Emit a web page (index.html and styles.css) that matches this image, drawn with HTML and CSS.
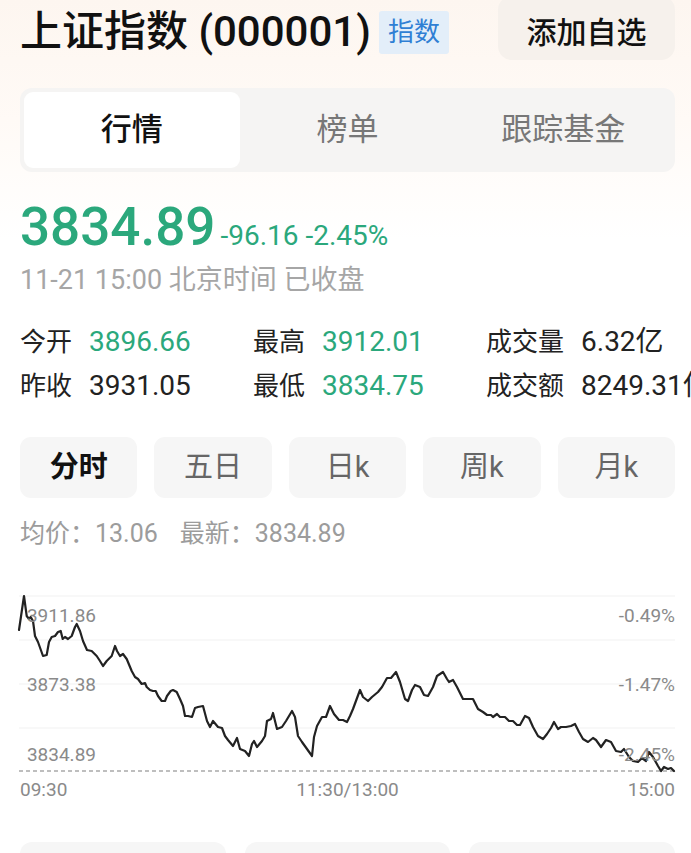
FILE: index.html
```html
<!DOCTYPE html>
<html lang="zh-CN">
<head>
    <meta charset="UTF-8">
    <meta name="viewport" content="width=device-width, initial-scale=1.0">
    <title>上证指数 (000001)</title>
    <link rel="stylesheet" href="styles.css">
</head>
<body>
    <div class="page">
        <header class="top">
            <div class="title-wrap">
                <h1 class="title">上证指数 (000001)</h1>
                <span class="badge">指数</span>
            </div>
            <button class="add-btn">添加自选</button>
        </header>

        <nav class="tabs">
            <div class="tab active">行情</div>
            <div class="tab">榜单</div>
            <div class="tab">跟踪基金</div>
        </nav>

        <section class="quote">
            <div class="price-row">
                <span class="price">3834.89</span>
                <span class="change">-96.16 -2.45%</span>
            </div>
            <div class="time">11-21 15:00 北京时间 已收盘</div>
        </section>

        <section class="stats">
            <div class="stat"><span class="label">今开</span><span class="value green">3896.66</span></div>
            <div class="stat"><span class="label">最高</span><span class="value green">3912.01</span></div>
            <div class="stat"><span class="label">成交量</span><span class="value">6.32亿</span></div>
            <div class="stat"><span class="label">昨收</span><span class="value">3931.05</span></div>
            <div class="stat"><span class="label">最低</span><span class="value green">3834.75</span></div>
            <div class="stat"><span class="label">成交额</span><span class="value">8249.31亿</span></div>
        </section>

        <div class="periods">
            <div class="period active">分时</div>
            <div class="period">五日</div>
            <div class="period">日k</div>
            <div class="period">周k</div>
            <div class="period">月k</div>
        </div>

        <div class="avg">均价：13.06<span class="latest">最新：3834.89</span></div>

        <div class="chart">
            <svg class="chart-svg" width="655" height="190" viewBox="20 585 655 190">
                <g class="grid">
                    <line x1="19" y1="597" x2="675" y2="597"/>
                    <line x1="19" y1="641" x2="675" y2="641"/>
                    <line x1="19" y1="685" x2="675" y2="685"/>
                    <line x1="19" y1="729" x2="675" y2="729"/>
                </g>
                <line class="base" x1="19" y1="772" x2="675" y2="772"/>
                <polyline class="line" points="19,631 24,597 26.7,617 29,620 30.7,618 33,622 35,637 38,643 43,657 46.7,656 49,643 51.7,638 55,637 58,633 60.7,632 62.7,640 65,638 68,640 71.7,637 75,628 76.7,625 80,632 83,642 87,651 91.7,652 96.7,657 100,662 103,667 106.7,662 111.7,657 115,647 117,652 120,657 123,655 126.7,660 131.7,672 135,678 138,680 141.7,685 145,684 146.7,688 150,691 153,692 155.7,692 158,697 161.7,702 165,702 167,697 170.7,692 173,691 176.7,693 180,700 183,707 185,717 188,717 192,718 195,709 198,708 203,707 207,722 210,728 213,722 218,728 222,729 225,737 228,741 233,747 237,739 240,750 245,752 249,757 252,745 254,742 257,748 262,742 265,737 267,722 271,720 273,714 277,730 282,728 286,722 292,712 295,718 298,737 302,743 307,750 312,757 314,738 317,727 322,718 326,718 330,707 334,715 339,721 343,721 347,723 350,717 353,710 360,691 363,698 368,702 372,698 378,693 382,688 387,679 391,679 396,673 400,683 405,700 408,702 412,691 415,686 420,688 424,696 428,697 433,688 437,677 443,673 447,680 449,683 453,681 457,688 463,700 468,700 473,700 478,710 483,713 487,716 491,716 493,718 497,715 500,718 505,718 509,722 513,722 517,726 520,726 525,717 529,719 533,728 538,737 543,740 547,735 551,729 554,723 558,730 561,728 566,728 571,727 575,725 579,733 583,740 588,743 593,739 596,741 601,748 606,741 611,743 616,752 621,753 624,750 629,758 633,762 638,763 642,759 646,762 649,753 653,758 658,767 661,772 664,768 668,770 671,769 674,772"/>
            </svg>
            <span class="y-label left l1">3911.86</span>
            <span class="y-label left l2">3873.38</span>
            <span class="y-label left l3">3834.89</span>
            <span class="y-label right l1">-0.49%</span>
            <span class="y-label right l2">-1.47%</span>
            <span class="y-label right l3">-2.45%</span>
        </div>

        <div class="axis">
            <span>09:30</span>
            <span>11:30/13:00</span>
            <span>15:00</span>
        </div>

        <div class="cards">
            <div class="card"></div>
            <div class="card"></div>
            <div class="card"></div>
        </div>
    </div>
</body>
</html>
```

FILE: styles.css
```css
body {
    margin: 0;
    font-family: Roboto, "Noto Sans CJK SC", sans-serif;
    color: #1a1a1a;
    background: linear-gradient(180deg, #fdf6f0 0, #fffaf6 120px, #ffffff 240px);
    overflow: hidden;
}

.page {
    padding: 0 16px 0 20px;
}

.top {
    display: flex;
    align-items: center;
    justify-content: space-between;
    height: 56px;
    padding-top: 4px;
}

.title-wrap {
    display: flex;
    align-items: center;
    gap: 8px;
}

.title {
    margin: 0;
    font-size: 42px;
    font-weight: 500;
    line-height: 48px;
    color: #111;
}

.badge {
    background-color: #e3eef9;
    color: #2f7fd4;
    font-size: 26px;
    line-height: 43px;
    padding: 0 9px;
    border-radius: 3px;
}

.add-btn {
    align-self: flex-start;
    margin-top: -8px;
    width: 177px;
    height: 64px;
    border: none;
    border-radius: 14px;
    background-color: #f6f1ec;
    font-family: inherit;
    font-size: 30px;
    font-weight: 500;
    color: #111;
    padding-top: 4px;
}

.tabs {
    display: flex;
    margin-top: 28px;
    padding: 4px;
    border-radius: 12px;
    background-color: #f5f4f3;
}

.tab {
    flex: 1;
    height: 76px;
    line-height: 76px;
    text-align: center;
    font-size: 31px;
    color: #777;
    border-radius: 9px;
}

.tab.active {
    background-color: #fff;
    color: #111;
    font-weight: 500;
}

.price-row {
    display: flex;
    align-items: baseline;
    gap: 5px;
    margin-top: 29px;
    line-height: 53px;
}

.price {
    font-size: 53px;
    font-weight: 500;
    color: #2ba87c;
}

.change {
    font-size: 28px;
    color: #2ba87c;
}

.time {
    margin-top: 0;
    font-size: 27px;
    line-height: 36px;
    color: #a6a6a6;
}

.stats {
    display: grid;
    grid-template-columns: repeat(3, 233px);
    margin-top: 22px;
}

.stat {
    display: flex;
    gap: 17px;
    font-size: 26px;
    line-height: 44px;
    white-space: nowrap;
}

.label {
    color: #222;
}

.value {
    font-size: 28px;
    color: #222;
}

.value.green {
    color: #2ba87c;
}

.periods {
    display: grid;
    grid-template-columns: repeat(5, 1fr);
    gap: 17px;
    margin-top: 29px;
}

.period {
    height: 61px;
    line-height: 61px;
    text-align: center;
    font-size: 29px;
    color: #666;
    background-color: #f6f6f6;
    border-radius: 11px;
}

.period.active {
    color: #111;
    font-weight: 600;
}

.avg {
    margin-top: 18px;
    font-size: 25px;
    line-height: 36px;
    color: #9c9c9c;
}

.latest {
    margin-left: 22px;
}

.chart {
    position: relative;
    margin-top: 32px;
    height: 190px;
}

.chart-svg {
    display: block;
    overflow: visible;
}

.grid line {
    stroke: #f1f1f1;
    stroke-width: 1;
}

.base {
    stroke: #a9a9a9;
    stroke-width: 1.5;
    stroke-dasharray: 4 3;
}

.line {
    fill: none;
    stroke: #222;
    stroke-width: 2.2;
    stroke-linejoin: round;
    stroke-linecap: round;
}

.y-label {
    position: absolute;
    font-size: 19px;
    line-height: 20px;
    color: #8a8a8a;
}

.y-label.left {
    left: 0;
    width: 76px;
    text-align: right;
}

.y-label.right {
    right: 0;
}

.l1 { top: 22px; }
.l2 { top: 91px; }
.l3 { top: 161px; }

.axis {
    display: flex;
    justify-content: space-between;
    margin-top: 3px;
    font-size: 19px;
    line-height: 26px;
    color: #8a8a8a;
}

.cards {
    display: grid;
    grid-template-columns: repeat(3, 1fr);
    gap: 19px;
    margin-top: 39px;
}

.card {
    height: 60px;
    border-radius: 12px;
    background-color: #f6f6f6;
}
```
